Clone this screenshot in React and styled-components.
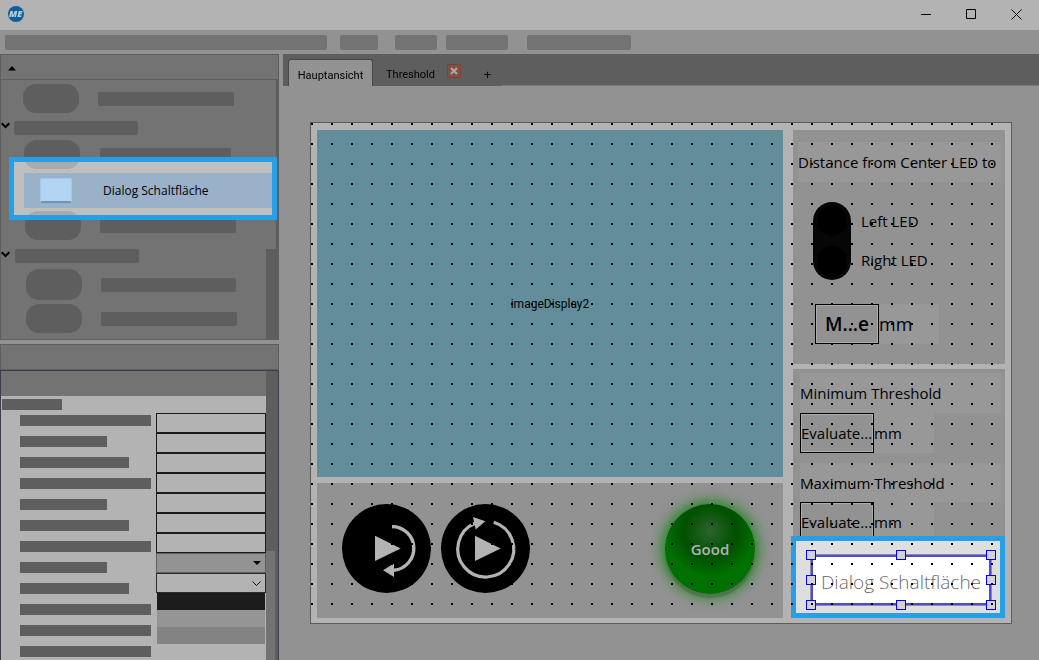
import { useState } from 'react'
import styled, { createGlobalStyle } from 'styled-components'

const menuBars = [322, 38, 42, 62, 104]
const menuGaps = [13, 17, 9, 19, 0]
const propertyBars = [131, 87, 109, 131, 87, 109, 131, 87, 109, 131, 131, 131]
const emptyFields = [1, 2, 3, 4, 5, 6, 7]

const Chevron = () => (
    <svg width="9" height="7" viewBox="0 0 9 7" fill="none" stroke="#000" strokeWidth="2">
        <path d="M0.7 1.2 L4.5 5 L8.3 1.2" />
    </svg>
)

const ToolRow = ({ height, left, gap, bar, pill = 29 }) => (
    <Tool $height={height} $left={left} $gap={gap}>
        <Pill $height={pill} />
        <Bar $width={bar} />
    </Tool>
)

const ToolHeading = ({ height, left }) => (
    <Heading $height={height} $left={left}>
        <Chevron />
        <Bar $width={124} />
    </Heading>
)

const Toolbox = () => (
    <ToolboxPanel>
        <ToolboxHeader>
            <svg width="8" height="5" viewBox="0 0 8 5"><path d="M0 4.5 L4 0 L8 4.5Z" /></svg>
        </ToolboxHeader>
        <ToolboxBody>
            <ToolList>
                <ToolRow height={37} left={22} gap={19} bar={136} />
                <ToolHeading height={21} left={4} />
                <ToolRow height={33} left={23} gap={20} bar={131} />
                <Selected>
                    <Frame />
                    <SelectedTool type="button">
                        <ToolIcon />
                        Dialog Schaltfläche
                    </SelectedTool>
                </Selected>
                <ToolRow height={35} left={24} gap={19} bar={136} />
                <ToolHeading height={26} left={5} />
                <ToolRow height={31} left={25} gap={19} bar={135} pill={31} />
                <ToolRow height={37} left={25} gap={19} bar={136} />
            </ToolList>
            <Scroll>
                <Thumb $height="169px" $width="10px" />
            </Scroll>
        </ToolboxBody>
    </ToolboxPanel>
)

const Properties = () => (
    <PropertyPanel>
        <PropertyTitle />
        <PropertyBody>
            <PropertyContent>
                <PropertyHeader />
                <GroupBar />
                <PropertyGrid>
                    <Names>
                        {propertyBars.map((width, i) => <NameBar key={i} $width={width} />)}
                    </Names>
                    <Fields>
                        {emptyFields.map(n => <Field key={n} aria-label={`Property ${n}`} />)}
                        <SelectBox $filled>
                            <select aria-label="Property 8" />
                            <svg width="8" height="4" viewBox="0 0 8 4"><path d="M0 0H8L4 4Z" /></svg>
                        </SelectBox>
                        <SelectBox>
                            <select aria-label="Property 9" />
                            <svg width="9" height="6" viewBox="0 0 9 6" fill="none" stroke="#000"><path d="M0.5 0.5L4.5 4.5L8.5 0.5" /></svg>
                        </SelectBox>
                        <Option $color="#1c1c1c" />
                        <Option $color="#959595" />
                        <Option $color="#838383" />
                    </Fields>
                </PropertyGrid>
            </PropertyContent>
            <Scroll>
                <Thumb $height="calc(100% - 180px)" $width="9px" $top="180px" />
            </Scroll>
        </PropertyBody>
    </PropertyPanel>
)

const Tabs = () => (
    <TabBar>
        <Tab type="button" $active>Hauptansicht</Tab>
        <Tab type="button">Threshold</Tab>
        <CloseTab type="button" aria-label="Close Threshold">
            <svg width="8" height="8" viewBox="0 0 8 8" stroke="#b3a5a2" strokeWidth="2"><path d="M1 1L7 7M7 1L1 7" /></svg>
        </CloseTab>
        <AddTab type="button">+</AddTab>
        <TabLine />
    </TabBar>
)

const DistancePanel = () => {
    const [side, setSide] = useState('')

    return <Distance>
        <Label as="h2">Distance from Center LED to</Label>
        <Choice>
            <Capsule>
                <input type="radio" id="left" name="led" checked={side === 'left'} onChange={() => setSide('left')} />
                <input type="radio" id="right" name="led" checked={side === 'right'} onChange={() => setSide('right')} />
            </Capsule>
            <ChoiceLabels>
                <label htmlFor="left">Left LED</label>
                <label htmlFor="right">Right LED</label>
            </ChoiceLabels>
        </Choice>
        <Measure>
            <Value $measure defaultValue="M...e" aria-label="Distance" />
            <Unit $big>mm</Unit>
        </Measure>
    </Distance>
}

const handles = ['0% 0%', '50% 0%', '100% 0%', '0% 50%', '100% 50%', '0% 100%', '50% 100%', '100% 100%']

const ThresholdPanel = () => (
    <Threshold>
        <Label as="label" htmlFor="min">Minimum Threshold</Label>
        <Measure>
            <Value id="min" defaultValue="Evaluate..." />
            <Unit>mm</Unit>
        </Measure>
        <Label as="label" htmlFor="max" $spaced>Maximum Threshold</Label>
        <Measure>
            <Value id="max" defaultValue="Evaluate..." />
            <Unit>mm</Unit>
        </Measure>
        <DialogArea>
            <DialogFrame />
            <DialogButton type="button">Dialog Schaltfläche</DialogButton>
            {handles.map(at => <Handle key={at} $x={at.split(' ')[0]} $y={at.split(' ')[1]} />)}
        </DialogArea>
    </Threshold>
)

const Controls = () => (
    <ControlPanel>
        <RoundButton type="button" aria-label="Run once">
            <svg viewBox="0 0 89 89" fill="#b3b3b3">
                <path d="M33 31.7L58.7 44.4L33 57Z" />
                <path d="M50 22.5A21.9 21.9 0 0 1 52 66.2" fill="none" stroke="#b3b3b3" strokeWidth="3.4" />
                <path d="M41 66.2L52 59.6V73Z" />
            </svg>
        </RoundButton>
        <RoundButton type="button" aria-label="Run continuously">
            <svg viewBox="0 0 89 89" fill="#b3b3b3">
                <path d="M34 31.7L59.7 44.4L34 57Z" />
                <path d="M52.7 18.2A28 28 0 1 1 34 19.2" fill="none" stroke="#b3b3b3" strokeWidth="3.2" />
                <path d="M32 13L44.4 17.2L34.7 25.4Z" />
            </svg>
        </RoundButton>
        <Lamp>Good</Lamp>
    </ControlPanel>
)

const App = () => (
    <Window>
        <GlobalStyle />
        <TitleBar>
            <svg width="16" height="16" viewBox="0 0 16 16">
                <circle cx="8" cy="8" r="8" fill="#0a609f" />
                <text x="7.7" y="11" textAnchor="middle" fontFamily="Open Sans, sans-serif" fontSize="9" fontWeight="800" fontStyle="italic" fill="#c0cdd6">ME</text>
            </svg>
            <WindowButtons>
                <button type="button" aria-label="Minimize"><svg width="11" height="11" viewBox="0 0 11 11" stroke="#000"><path d="M0 5.5H10" /></svg></button>
                <button type="button" aria-label="Maximize"><svg width="11" height="11" viewBox="0 0 11 11" stroke="#000" fill="none"><path d="M0.5 0.5H9.5V9.5H0.5Z" /></svg></button>
                <button type="button" aria-label="Close"><svg width="11" height="11" viewBox="0 0 11 11" stroke="#000"><path d="M0.5 0.5L10.5 10.5M10.5 0.5L0.5 10.5" /></svg></button>
            </WindowButtons>
        </TitleBar>
        <MenuBar>
            {menuBars.map((width, i) => <MenuItem key={width} $width={width} $gap={menuGaps[i]} />)}
        </MenuBar>
        <Main>
            <Sidebar>
                <Toolbox />
                <Properties />
            </Sidebar>
            <Editor>
                <Tabs />
                <Workspace>
                    <Form>
                        <Column $rows="1fr 135px" $gap="6px">
                            <ImageDisplay>imageDisplay2</ImageDisplay>
                            <Controls />
                        </Column>
                        <Column $rows="1fr 249px" $gap="5px">
                            <DistancePanel />
                            <ThresholdPanel />
                        </Column>
                        <Dots />
                    </Form>
                </Workspace>
            </Editor>
        </Main>
    </Window>
)

export default App

const GlobalStyle = createGlobalStyle`
    * {
        box-sizing: border-box;
        margin: 0;
        padding: 0;
    }

    body {
        font-family: 'Open Sans', sans-serif;
        font-size: 12px;
        color: #000000;
        background-color: #929292;
    }

    button, input, select {
        font: inherit;
        color: inherit;
        border: none;
        border-radius: 0;
        background: none;
    }

    svg {
        display: block;
        flex: none;
    }
`

const Window = styled.div`
    height: 100vh;
    min-height: 660px;
    display: flex;
    flex-direction: column;
    overflow: hidden;
`

const TitleBar = styled.header`
    height: 30px;
    flex: none;
    display: flex;
    justify-content: space-between;
    align-items: center;
    padding: 0 0 2px 8px;
    background-color: #b3b3b3;
`

const WindowButtons = styled.div`
    display: flex;

    button {
        width: 45px;
        height: 28px;
        display: flex;
        align-items: center;
        justify-content: center;
    }
`

const MenuBar = styled.nav`
    height: 24px;
    flex: none;
    display: flex;
    align-items: center;
    padding: 1px 5px 0;
`

const MenuItem = styled.div`
    width: ${({ $width }) => $width}px;
    height: 15px;
    margin-right: ${({ $gap }) => $gap}px;
    border-radius: 2px;
    background-color: #737373;
`

const Main = styled.main`
    flex: 1;
    min-height: 0;
    display: flex;
    gap: 4px;
`

const Sidebar = styled.aside`
    width: 279px;
    flex: none;
    display: flex;
    flex-direction: column;
    gap: 4px;
`

const ToolboxPanel = styled.section`
    flex: none;
    border: 1px solid #5e5e5e;
    background-color: #737373;
`

const ToolboxHeader = styled.div`
    height: 25px;
    display: flex;
    align-items: center;
    padding: 2px 0 0 7px;
    border-bottom: 1px solid #5e5e5e;
`

const ToolboxBody = styled.div`
    height: 259px;
    display: flex;
`

const ToolList = styled.div`
    flex: 1;
`

const Scroll = styled.div`
    width: 12px;
    background-color: #5e5e5e;
`

const Thumb = styled.div`
    width: ${({ $width }) => $width};
    height: ${({ $height }) => $height};
    margin-top: ${({ $top }) => $top || 0};
    background-color: #737373;
`

const Tool = styled.div`
    height: ${({ $height }) => $height}px;
    display: flex;
    align-items: center;
    gap: ${({ $gap }) => $gap}px;
    padding-left: ${({ $left }) => $left}px;
`

const Heading = styled.div`
    height: ${({ $height }) => $height}px;
    display: flex;
    align-items: center;
    gap: ${({ $left }) => $left}px;

    svg {
        margin-bottom: 4px;
    }
`

const Pill = styled.div`
    width: 56px;
    height: ${({ $height }) => $height}px;
    border-radius: 13px;
    background-color: #5e5e5e;
`

const Bar = styled.div`
    width: ${({ $width }) => $width}px;
    height: 14px;
    border-radius: 2px;
    background-color: #5e5e5e;
`

const Selected = styled.div`
    position: relative;
    margin: 2px -6px 0 23px;
`

const Frame = styled.div`
    position: absolute;
    inset: -16px -5px -12px -15px;
    border: 5px solid #269fe9;

    &::before {
        content: '';
        position: absolute;
        inset: 0;
        background-color: #4c4c4c;
        mix-blend-mode: plus-lighter;
    }
`

const SelectedTool = styled.button`
    position: relative;
    width: 100%;
    height: 35px;
    display: flex;
    align-items: center;
    gap: 31px;
    padding-left: 16px;
    background-color: #99b2ca;
`

const ToolIcon = styled.span`
    width: 32px;
    height: 25px;
    border-radius: 2px;
    border: 1px solid #a5c8e8;
    border-bottom: 2px solid #6f94b8;
    background-color: #b1d4f3;
`

const PropertyPanel = styled.section`
    flex: 1;
    min-height: 0;
    display: flex;
    flex-direction: column;
`

const PropertyTitle = styled.div`
    height: 26px;
    flex: none;
    border: 1px solid #5e5e5e;
    background-color: #737373;
`

const PropertyBody = styled.div`
    flex: 1;
    min-height: 0;
    display: flex;
    border: 1px solid #3b3e48;
    border-bottom: none;
`

const PropertyContent = styled.div`
    flex: 1;
    overflow: hidden;
    background-color: #b3b3b3;
`

const PropertyHeader = styled.div`
    height: 25px;
    background-color: #737373;
`

const GroupBar = styled.div`
    width: 60px;
    height: 11px;
    margin: 3px 0 3px 1px;
    background-color: #5e5e5e;
`

const PropertyGrid = styled.div`
    display: grid;
    grid-template-columns: 1fr 110px;
`

const Names = styled.div`
    display: flex;
    flex-direction: column;
    gap: 10px;
    padding: 2px 0 0 19px;
`

const NameBar = styled.div`
    width: ${({ $width }) => $width}px;
    height: 11px;
    background-color: #5e5e5e;
`

const Fields = styled.div`
    display: flex;
    flex-direction: column;
`

const Field = styled.input`
    width: 110px;
    height: 20px;
    border: 1px solid #1c1c1c;
    padding: 0 4px;
`

const SelectBox = styled.div`
    position: relative;
    height: 20px;

    select {
        appearance: none;
        display: block;
        width: 100%;
        height: 20px;
        border: 1px solid ${({ $filled }) => $filled ? '#5e5e5e' : '#2b2b2b'};
        background-color: ${({ $filled }) => $filled ? '#939393' : '#b3b3b3'};
    }

    svg {
        position: absolute;
        right: 5px;
        top: 8px;
        pointer-events: none;
    }
`

const Option = styled.div`
    height: 17px;
    margin: 0 1px;
    background-color: ${({ $color }) => $color};
`

const Editor = styled.section`
    flex: 1;
    min-width: 0;
    display: flex;
    flex-direction: column;
`

const TabBar = styled.nav`
    height: 32px;
    flex: none;
    display: flex;
    align-items: flex-end;
    padding-left: 5px;
    background-color: #5e5e5e;
`

const Tab = styled.button`
    width: ${({ $active }) => $active ? 85 : 74}px;
    height: 27px;
    padding-top: 4px;
    font-family: Roboto, sans-serif;
    font-size: 11px;
    text-align: ${({ $active }) => $active ? 'center' : 'right'};
    padding-right: ${({ $active }) => $active ? 0 : 12}px;
    white-space: nowrap;
    border: ${({ $active }) => $active ? '1px solid #484848' : 'none'};
    border-bottom: none;
    border-radius: 3px 3px 0 0;
    background-color: ${({ $active }) => $active ? '#929292' : 'transparent'};
`

const CloseTab = styled.button`
    width: 14px;
    height: 14px;
    margin-bottom: 8px;
    display: flex;
    align-items: center;
    justify-content: center;
    border: 1px solid #853c36;
    border-radius: 2px;
    background-color: #7f5149;
`

const AddTab = styled.button`
    width: 41px;
    height: 27px;
    padding: 3px 0 0 12px;
    font-size: 13px;
`

const TabLine = styled.div`
    flex: 1;
    height: 1px;
    background-color: #7c7c7c;
`

const Workspace = styled.div`
    flex: 1;
    min-height: 0;
    display: flex;
    padding: 36px 27px;
`

const Form = styled.div`
    position: relative;
    flex: 1;
    display: grid;
    grid-template-columns: 1fr 212px;
    gap: 10px;
    padding: 7px 6px 5px;
    border: 1px solid #5c5c5c;
    background-color: #b3b3b3;
`

const Column = styled.div`
    display: grid;
    grid-template-rows: ${({ $rows }) => $rows};
    gap: ${({ $gap }) => $gap};
`

// designer snap grid, drawn over the widgets
const Dots = styled.div`
    position: absolute;
    inset: 0;
    z-index: 2;
    pointer-events: none;
    background: conic-gradient(from 270deg at 2px 2px, #000000 90deg, transparent 0) 0 0 / 20px 20px;
`

const ImageDisplay = styled.div`
    display: flex;
    align-items: center;
    justify-content: center;
    font-family: Roboto, sans-serif;
    background-color: #628d9a;
`

const ControlPanel = styled.div`
    display: flex;
    align-items: flex-start;
    gap: 10px;
    padding: 21px 28px 0 25px;
    background-color: #929292;
`

const RoundButton = styled.button`
    width: 89px;
    height: 89px;
    border-radius: 50%;
    background-color: #000000;
`

const Lamp = styled.output`
    width: 90px;
    height: 90px;
    margin-left: auto;
    display: flex;
    align-items: center;
    justify-content: center;
    font-size: 15px;
    font-weight: 600;
    color: #b3b3b3;
    border-radius: 50%;
    background: radial-gradient(circle at 50% 30%, #2d632d 0, #005200 32%, #005200 36%, #007000 58%, #007000 100%);
    box-shadow: 0 4px 1px rgba(80, 110, 80, 0.8), 0 0 14px 3px rgba(0, 130, 0, 0.8);
`

const Distance = styled.section`
    padding: 12px 4px 0 5px;
    background-color: #929292;
`

const Label = styled.div`
    display: block;
    height: ${({ $spaced }) => $spaced ? 39 : 40}px;
    margin-top: ${({ $spaced }) => $spaced ? 10 : 0}px;
    line-height: 40px;
    font-size: 15px;
    font-weight: 400;
    white-space: nowrap;
    background-color: #989898;
`

const Choice = styled.div`
    display: flex;
    gap: 10px;
    padding: 20px 0 24px 15px;
`

const Capsule = styled.div`
    width: 38px;
    height: 78px;
    display: flex;
    flex-direction: column;
    align-items: center;
    gap: 10px;
    padding-top: 4px;
    border-radius: 19px;
    background-color: #060606;

    input {
        appearance: none;
        width: 30px;
        height: 30px;
        border-radius: 50%;
        background-color: #000000;
    }
`

const ChoiceLabels = styled.div`
    display: flex;
    flex-direction: column;
    height: 78px;
    font-size: 15px;
    line-height: 39px;
`

const Measure = styled.div`
    display: flex;
    height: 40px;

    ${Distance} & {
        padding-left: 17px;
    }
`

const Value = styled.input`
    width: ${({ $measure }) => $measure ? 64 : 74}px;
    height: 40px;
    font-size: ${({ $measure }) => $measure ? 19 : 15}px;
    font-weight: ${({ $measure }) => $measure ? 600 : 400};
    text-align: ${({ $measure }) => $measure ? 'center' : 'left'};
    border: 1px solid #000000;
    box-shadow: inset 0 0 0 1px #acacac;
    background-color: #929292;
`

const Unit = styled.span`
    width: 60px;
    line-height: 40px;
    font-size: ${({ $big }) => $big ? 18 : 15}px;
    background-color: #989898;
`

const Threshold = styled.section`
    padding: 4px 4px 0 7px;
    background-color: #929292;
`

const DialogArea = styled.div`
    position: relative;
    height: 50px;
    margin: 13px 10px 0 11px;
`

const DialogFrame = styled.div`
    position: absolute;
    z-index: 1;
    inset: -19px -14px -13px -20px;
    border: 5px solid #269fe9;
    background-color: #dedede;
`

const DialogButton = styled.button`
    position: relative;
    z-index: 1;
    width: 100%;
    height: 50px;
    padding-top: 3px;
    font-size: 19px;
    font-weight: 300;
    color: #6c6c6c;
    white-space: nowrap;
    border: 2px solid #4c49d8;
    outline: 1px solid #8f8fa0;
    background-color: #ffffff;
`

const Handle = styled.span`
    position: absolute;
    z-index: 1;
    left: ${({ $x }) => $x};
    top: ${({ $y }) => $y};
    width: 10px;
    height: 10px;
    margin: -5px 0 0 -5px;
    border: 1px solid #0000ff;
    background-color: #d3d3d3;
`
